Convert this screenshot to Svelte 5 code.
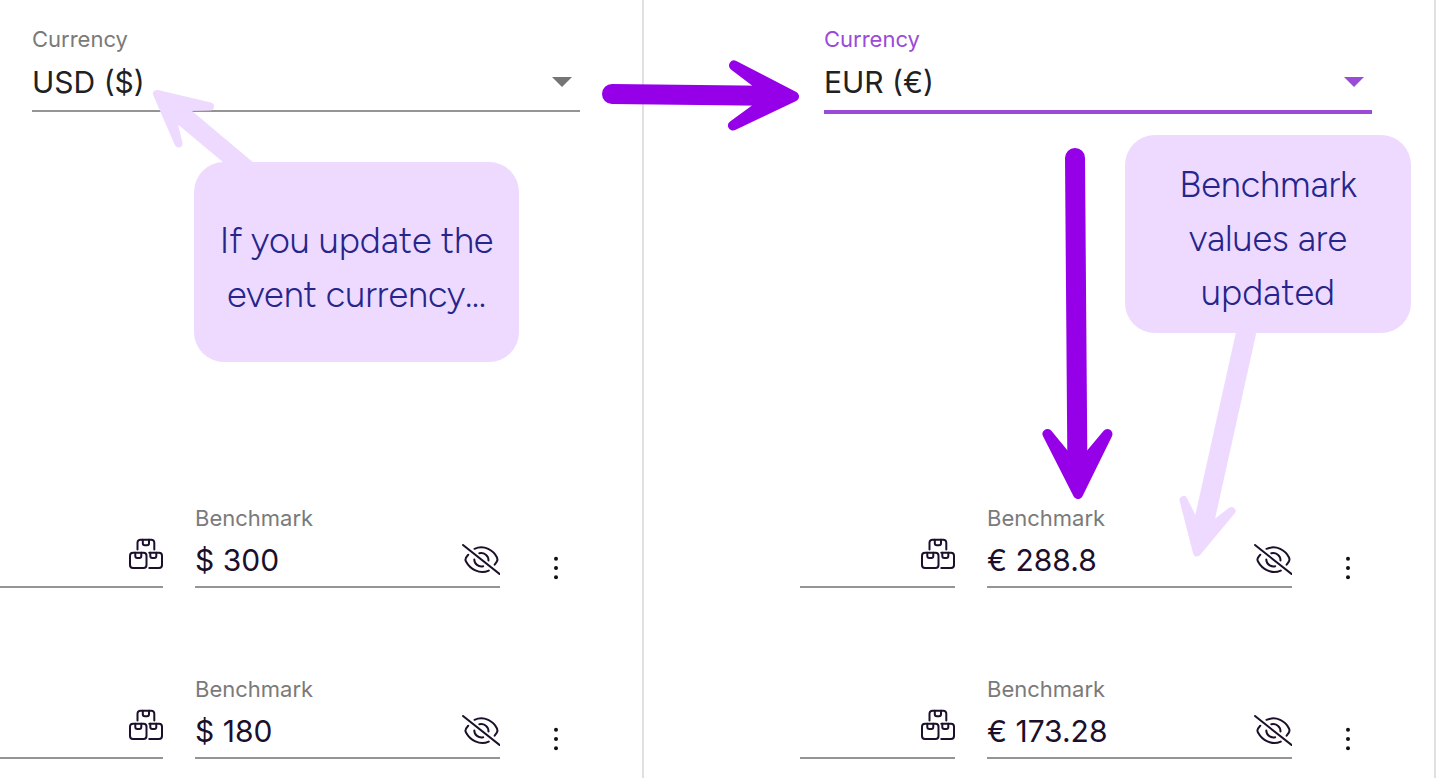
<script>
  const panels = [
    {
      id: 'before',
      currency: 'USD ($)',
      active: false,
      callout: ['If you update the', 'event currency...'],
      rows: ['$ 300', '$ 180']
    },
    {
      id: 'after',
      currency: 'EUR (€)',
      active: true,
      callout: ['Benchmark', 'values are', 'updated'],
      rows: ['€ 288.8', '€ 173.28']
    }
  ];
</script>

<main class="board">
  {#each panels as panel (panel.id)}
    <section class="panel {panel.id}">
      <div class="top">
        <div class="field currency" class:active={panel.active}>
          <label for="currency-{panel.id}">Currency</label>
          <div class="control">
            <select id="currency-{panel.id}">
              <option>{panel.currency}</option>
            </select>
            <svg class="caret" width="20" height="10" viewBox="0 0 20 10" aria-hidden="true">
              <path d="M0 0h20L10 10z" fill="currentColor" />
            </svg>
          </div>
        </div>
      </div>

      <div class="rows">
        {#each panel.rows as value, i}
          <div class="row">
            <div class="stock">
              <button type="button" class="icon" aria-label="Packages">
                <svg width="34" height="32" viewBox="0 0 34 32" fill="none" stroke="currentColor" stroke-width="2" stroke-linecap="round" stroke-linejoin="round">
                  <path d="M8.500 11.500V4.700A3 3 0 0 1 11.500 1.700H22.300A3 3 0 0 1 25.300 4.700V11.500" />
                  <path d="M13.800 1.700V5.300a2 2 0 0 0 2 2h2.200a2 2 0 0 0 2-2V1.700" />
                  <rect x="1" y="14.700" width="16.500" height="15.300" rx="3" />
                  <path d="M6.300 14.700V18a2 2 0 0 0 2 2h2a2 2 0 0 0 2-2V14.700" />
                  <path d="M20.300 14.700H30A3 3 0 0 1 33 17.700V27A3 3 0 0 1 30 30H20.300" />
                  <path d="M21.300 14.700V18a2 2 0 0 0 2 2h2a2 2 0 0 0 2-2V14.700" />
                </svg>
              </button>
            </div>
            <div class="field">
              <label for="{panel.id}-{i}">Benchmark</label>
              <div class="control">
                <input id="{panel.id}-{i}" type="text" {value} />
                <button type="button" class="icon" aria-label="Hide value">
                  <svg width="38" height="32" viewBox="0 0 38 32" fill="none" stroke="currentColor" stroke-width="2" stroke-linecap="round" stroke-linejoin="round">
                    <path d="M1 1 37.500 30" />
                    <path d="M12.500 4.800C22.500 .6 31.500 6.500 35 13.500C35.700 15 35.500 16.500 34.800 17.600L32.600 20.800" />
                    <path d="M6.300 10.700 4 13.700C3.300 14.900 3.300 16.300 4 17.500C8 25 17.500 30.800 26.800 26.600" />
                    <path d="M17.300 9.300C22.500 8.300 26.500 11.800 26.500 16.500" />
                    <path d="M12.300 15.500C12.300 19.800 16.500 23.300 21.200 22.200" />
                  </svg>
                </button>
              </div>
            </div>
            <button type="button" class="more" aria-label="More options">
              <svg width="6" height="24" viewBox="0 0 6 24" fill="currentColor">
                <circle cx="3" cy="2.700" r="2" />
                <circle cx="3" cy="12" r="2" />
                <circle cx="3" cy="21.300" r="2" />
              </svg>
            </button>
          </div>
        {/each}
      </div>

      <svg class="arrows" width="644" height="600" viewBox="0 0 644 600" aria-hidden="true">
        {#if panel.active}
          <path class="strong-line" d="M283 158 285.500 480" />
          <path class="strong" d="M255.500 434 286 494 315.500 434 294.500 459H276z" />
          <path class="soft-shaft" d="M444 332H464.500L423 519 408 545 403.300 515z" />
          <path class="soft" d="M391.500 500 405 552.500 439.500 511 424 523 401 519z" />
        {:else}
          <path class="strong-line" d="M612 94 780 96" />
          <path class="strong" d="M734 65.500 794 96.500 733 125.500 757 108V83z" />
          <path class="soft-shaft" d="M170 100 192 111 260 168H230L178 124.500z" />
          <path class="soft" d="M178.500 143.500 157 94 210 106.500 188 107 174 125z" />
        {/if}
      </svg>

      <p class="callout">
        {#each panel.callout as line}<span>{line}</span>{/each}
      </p>
    </section>
  {/each}
</main>

<style>
  :global(body) {
    background: #fff;
  }

  .board {
    display: grid;
    grid-template-columns: 1fr 1fr;
    column-gap: 148px;
    min-height: 100vh;
    overflow: hidden;
    font-family: Inter, 'Liberation Sans', sans-serif;
    color: #1c0f2b;
  }

  .panel {
    position: relative;
    min-width: 0;
    border-right: 2px solid #e0e0e0;
  }

  .top {
    box-sizing: border-box;
    min-height: 504px;
    padding: 25px 62px 0 32px;
  }

  label {
    display: block;
    font-size: 22px;
    line-height: 28px;
    color: #7a7a7a;
  }

  .control {
    display: flex;
    align-items: center;
    height: 52px;
    padding-top: 2px;
    border-bottom: 2px solid #949494;
  }

  .currency .control {
    position: relative;
    height: 57px;
    padding-top: 0;
  }

  select,
  input {
    flex: 1;
    min-width: 0;
    width: 100%;
    height: 100%;
    margin: 0;
    padding: 0;
    border: 0;
    outline: 0;
    background: none;
    font: 30px/40px Inter, 'Liberation Sans', sans-serif;
    color: inherit;
  }

  select {
    appearance: none;
    color: #212121;
  }

  .caret {
    position: absolute;
    right: 8px;
    color: #757575;
    pointer-events: none;
  }

  .active label,
  .active .caret {
    color: #9a4bd8;
  }

  .active .control {
    border-bottom: 4px solid #9a4bd8;
  }

  .rows {
    display: grid;
    row-gap: 87px;
    padding-right: 62px;
  }

  .after .rows {
    padding-left: 8px;
  }

  .row {
    display: grid;
    grid-template-columns: 1fr 305px 48px;
    column-gap: 32px;
    height: 84px;
  }

  .stock {
    display: flex;
    align-items: flex-start;
    justify-content: flex-end;
    box-sizing: border-box;
    padding-top: 34px;
    border-bottom: 2px solid #949494;
  }

  button {
    display: flex;
    padding: 0;
    border: 0;
    background: none;
    color: inherit;
    cursor: pointer;
  }

  .more {
    align-self: end;
    align-items: center;
    justify-content: center;
    height: 40px;
    color: #111;
  }

  .arrows {
    position: absolute;
    top: 0;
    left: 0;
    overflow: visible;
    pointer-events: none;
  }

  .strong-line {
    fill: none;
    stroke: #9500e8;
    stroke-width: 20;
    stroke-linecap: round;
  }

  .strong {
    fill: #9500e8;
    stroke: #9500e8;
    stroke-width: 10;
    stroke-linejoin: round;
  }

  .soft-shaft {
    fill: #eedaff;
  }

  .soft {
    fill: #eedaff;
    stroke: #eedaff;
    stroke-width: 8;
    stroke-linejoin: round;
  }

  .callout {
    position: absolute;
    box-sizing: border-box;
    margin: 0;
    border-radius: 30px;
    background: #eedaff;
    color: #25258c;
    font-family: Figtree, Lato, sans-serif;
    font-size: 36px;
    font-weight: 300;
    line-height: 54px;
    text-align: center;
  }

  .callout span {
    display: block;
    white-space: nowrap;
  }

  .before .callout {
    top: 162px;
    left: 194px;
    width: 325px;
    padding: 52px 0 40px;
  }

  .after .callout {
    top: 135px;
    left: 333px;
    width: 286px;
    padding: 23px 0 13px;
  }
</style>
